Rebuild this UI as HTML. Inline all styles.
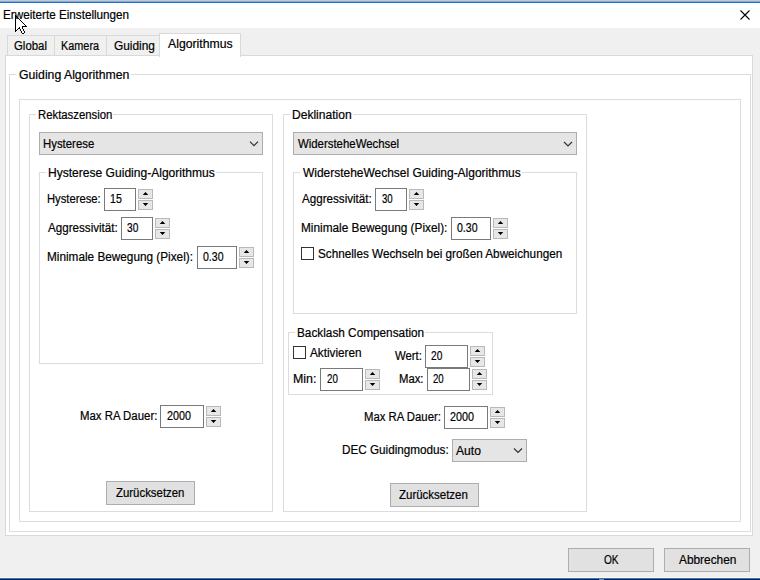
<!DOCTYPE html>
<html><head><meta charset="utf-8"><style>
html,body{margin:0;padding:0;}
body{width:760px;height:580px;position:relative;overflow:hidden;background:#f0f0f0;font-family:"Liberation Sans",sans-serif;font-size:12.3px;color:#000;}
.a{position:absolute;box-sizing:border-box;}
.t{position:absolute;white-space:nowrap;line-height:14px;transform-origin:0 0;-webkit-text-stroke:0.2px #000;}
</style></head><body>
<div class="a" style="left:0px;top:0px;width:760px;height:1px;background:#c9c9c9;"></div>
<div class="a" style="left:0px;top:1px;width:760px;height:1px;background:#7fa9d8;"></div>
<div class="a" style="left:0px;top:2px;width:760px;height:1px;background:#1f75cc;"></div>
<div class="a" style="left:0px;top:3px;width:760px;height:25px;background:#fff;"></div>
<div class="a" style="left:0px;top:577px;width:760px;height:1px;background:#f6f6f6;"></div>
<div class="a" style="left:0px;top:578px;width:760px;height:1px;background:#2a7ad0;"></div>
<div class="a" style="left:0px;top:579px;width:760px;height:1px;background:#0b1e3c;"></div>
<svg class="a" style="left:0;top:0" width="40" height="40"><path d="M16 17h1v1h-1zM16 18h1v1h-1zM17 18h1v1h-1zM16 19h1v1h-1zM17 19h1v1h-1zM18 19h1v1h-1zM16 20h1v1h-1zM17 20h1v1h-1zM18 20h1v1h-1zM19 20h1v1h-1zM16 21h1v1h-1zM17 21h1v1h-1zM18 21h1v1h-1zM19 21h1v1h-1zM20 21h1v1h-1zM16 22h1v1h-1zM17 22h1v1h-1zM18 22h1v1h-1zM19 22h1v1h-1zM20 22h1v1h-1zM21 22h1v1h-1zM16 23h1v1h-1zM17 23h1v1h-1zM18 23h1v1h-1zM19 23h1v1h-1zM20 23h1v1h-1zM21 23h1v1h-1zM22 23h1v1h-1zM16 24h1v1h-1zM17 24h1v1h-1zM18 24h1v1h-1zM19 24h1v1h-1zM20 24h1v1h-1zM21 24h1v1h-1zM22 24h1v1h-1zM23 24h1v1h-1zM16 25h1v1h-1zM17 25h1v1h-1zM18 25h1v1h-1zM19 25h1v1h-1zM20 25h1v1h-1zM21 25h1v1h-1zM22 25h1v1h-1zM23 25h1v1h-1zM24 25h1v1h-1zM16 26h1v1h-1zM17 26h1v1h-1zM18 26h1v1h-1zM19 26h1v1h-1zM20 26h1v1h-1zM21 26h1v1h-1zM16 27h1v1h-1zM17 27h1v1h-1zM18 27h1v1h-1zM20 27h1v1h-1zM21 27h1v1h-1zM16 28h1v1h-1zM17 28h1v1h-1zM20 28h1v1h-1zM21 28h1v1h-1zM16 29h1v1h-1zM21 29h1v1h-1zM22 29h1v1h-1zM21 30h1v1h-1zM22 30h1v1h-1zM22 31h1v1h-1zM23 31h1v1h-1zM22 32h1v1h-1zM23 32h1v1h-1z" fill="#fff" shape-rendering="crispEdges"/><path d="M15 15h1v1h-1zM15 16h1v1h-1zM16 16h1v1h-1zM15 17h1v1h-1zM17 17h1v1h-1zM15 18h1v1h-1zM18 18h1v1h-1zM15 19h1v1h-1zM19 19h1v1h-1zM15 20h1v1h-1zM20 20h1v1h-1zM15 21h1v1h-1zM21 21h1v1h-1zM15 22h1v1h-1zM22 22h1v1h-1zM15 23h1v1h-1zM23 23h1v1h-1zM15 24h1v1h-1zM24 24h1v1h-1zM15 25h1v1h-1zM25 25h1v1h-1zM15 26h1v1h-1zM22 26h1v1h-1zM23 26h1v1h-1zM24 26h1v1h-1zM25 26h1v1h-1zM26 26h1v1h-1zM15 27h1v1h-1zM19 27h1v1h-1zM22 27h1v1h-1zM15 28h1v1h-1zM18 28h1v1h-1zM19 28h1v1h-1zM22 28h1v1h-1zM15 29h1v1h-1zM17 29h1v1h-1zM20 29h1v1h-1zM23 29h1v1h-1zM15 30h1v1h-1zM16 30h1v1h-1zM20 30h1v1h-1zM23 30h1v1h-1zM15 31h1v1h-1zM21 31h1v1h-1zM24 31h1v1h-1zM21 32h1v1h-1zM24 32h1v1h-1zM22 33h1v1h-1zM23 33h1v1h-1z" fill="#000" shape-rendering="crispEdges"/></svg>
<div class="t" style="left:2.95px;top:8.04px;transform:scaleX(0.9511)">Erweiterte Einstellungen</div>
<div class="a" style="left:7px;top:35px;width:48px;height:22px;border:1px solid #d9d9d9;background:#f0f0f0;"></div>
<div class="a" style="left:54px;top:35px;width:53px;height:22px;border:1px solid #d9d9d9;background:#f0f0f0;"></div>
<div class="a" style="left:106px;top:35px;width:54px;height:22px;border:1px solid #d9d9d9;background:#f0f0f0;"></div>
<div class="t" style="left:14.00px;top:38.74px;transform:scaleX(0.9257)">Global</div>
<div class="t" style="left:61.12px;top:38.74px;transform:scaleX(0.8837)">Kamera</div>
<div class="t" style="left:113.90px;top:38.74px;transform:scaleX(0.9667)">Guiding</div>
<div class="a" style="left:5px;top:55px;width:748px;height:481px;border:1px solid #d9d9d9;background:#fff;"></div>
<div class="a" style="left:159px;top:33px;width:82px;height:24px;border:1px solid #d9d9d9;background:#fff;border-bottom:none;"></div>
<div class="t" style="left:168.20px;top:36.94px;transform:scaleX(0.9954)">Algorithmus</div>
<div class="a" style="left:9px;top:74px;width:742px;height:458px;border:1px solid #dcdcdc;"></div>
<div class="a" style="left:16px;top:74px;width:115px;height:1px;background:#fff"></div>
<div class="t" style="left:19.00px;top:67.94px;transform:scaleX(0.9964)">Guiding Algorithmen</div>
<div class="a" style="left:19px;top:99px;width:722px;height:423px;border:1px solid #dcdcdc;"></div>
<div class="a" style="left:29px;top:114px;width:244px;height:398px;border:1px solid #dcdcdc;"></div>
<div class="a" style="left:36px;top:114px;width:77px;height:1px;background:#fff"></div>
<div class="t" style="left:37.88px;top:108.04px;transform:scaleX(0.9215)">Rektaszension</div>
<div class="a" style="left:39px;top:132px;width:224px;height:23px;border:1px solid #adadad;background:#e5e5e5;"></div>
<div class="t" style="left:43.07px;top:136.74px;transform:scaleX(0.9259)">Hysterese</div>
<div class="a" style="left:39px;top:172px;width:224px;height:192px;border:1px solid #dcdcdc;"></div>
<div class="a" style="left:46px;top:172px;width:170px;height:1px;background:#fff"></div>
<div class="t" style="left:47.92px;top:165.74px;transform:scaleX(0.9805)">Hysterese Guiding-Algorithmus</div>
<div class="t" style="left:47.09px;top:191.74px;transform:scaleX(0.9123)">Hysterese:</div>
<div class="a" style="left:104px;top:188px;width:32px;height:23px;border:1px solid #7a7a7a;background:#fff;"></div>
<div class="t" style="left:109.94px;top:192.04px;transform:scaleX(0.8615)">15</div>
<div class="a" style="left:138px;top:189px;width:15px;height:10px;border:1px solid #b9b9b9;background:#e7e7e7;"></div>
<div class="a" style="left:138px;top:200px;width:15px;height:10px;border:1px solid #b9b9b9;background:#e7e7e7;"></div>
<div class="t" style="left:48.00px;top:220.74px;transform:scaleX(0.9452)">Aggressivität:</div>
<div class="a" style="left:121px;top:217px;width:32px;height:23px;border:1px solid #7a7a7a;background:#fff;"></div>
<div class="t" style="left:127.40px;top:221.04px;transform:scaleX(0.8286)">30</div>
<div class="a" style="left:155px;top:218px;width:15px;height:10px;border:1px solid #b9b9b9;background:#e7e7e7;"></div>
<div class="a" style="left:155px;top:229px;width:15px;height:10px;border:1px solid #b9b9b9;background:#e7e7e7;"></div>
<div class="t" style="left:47.44px;top:249.74px;transform:scaleX(0.9576)">Minimale Bewegung (Pixel):</div>
<div class="a" style="left:197px;top:246px;width:40px;height:23px;border:1px solid #7a7a7a;background:#fff;"></div>
<div class="t" style="left:203.40px;top:250.04px;transform:scaleX(0.8583)">0.30</div>
<div class="a" style="left:239px;top:247px;width:15px;height:10px;border:1px solid #b9b9b9;background:#e7e7e7;"></div>
<div class="a" style="left:239px;top:258px;width:15px;height:10px;border:1px solid #b9b9b9;background:#e7e7e7;"></div>
<div class="t" style="left:79.97px;top:409.04px;transform:scaleX(0.9280)">Max RA Dauer:</div>
<div class="a" style="left:160px;top:405px;width:44px;height:23px;border:1px solid #7a7a7a;background:#fff;"></div>
<div class="t" style="left:166.90px;top:409.24px;transform:scaleX(0.8741)">2000</div>
<div class="a" style="left:206px;top:406px;width:15px;height:10px;border:1px solid #b9b9b9;background:#e7e7e7;"></div>
<div class="a" style="left:206px;top:417px;width:15px;height:10px;border:1px solid #b9b9b9;background:#e7e7e7;"></div>
<div class="a" style="left:106px;top:481px;width:89px;height:24px;border:1px solid #adadad;background:#e1e1e1;"></div>
<div class="t" style="left:115.60px;top:485.54px;transform:scaleX(0.9270)">Zurücksetzen</div>
<div class="a" style="left:283px;top:114px;width:304px;height:398px;border:1px solid #dcdcdc;"></div>
<div class="a" style="left:290px;top:114px;width:63px;height:1px;background:#fff"></div>
<div class="t" style="left:291.82px;top:108.04px;transform:scaleX(0.9800)">Deklination</div>
<div class="a" style="left:293px;top:132px;width:284px;height:23px;border:1px solid #adadad;background:#e5e5e5;"></div>
<div class="t" style="left:298.00px;top:136.74px;transform:scaleX(0.9266)">WidersteheWechsel</div>
<div class="a" style="left:293px;top:172px;width:284px;height:142px;border:1px solid #dcdcdc;"></div>
<div class="a" style="left:300px;top:172px;width:222px;height:1px;background:#fff"></div>
<div class="t" style="left:302.80px;top:165.74px;transform:scaleX(0.9723)">WidersteheWechsel Guiding-Algorithmus</div>
<div class="t" style="left:302.00px;top:191.74px;transform:scaleX(0.9452)">Aggressivität:</div>
<div class="a" style="left:375px;top:188px;width:32px;height:23px;border:1px solid #7a7a7a;background:#fff;"></div>
<div class="t" style="left:382.00px;top:192.04px;transform:scaleX(0.7857)">30</div>
<div class="a" style="left:409px;top:189px;width:15px;height:10px;border:1px solid #b9b9b9;background:#e7e7e7;"></div>
<div class="a" style="left:409px;top:200px;width:15px;height:10px;border:1px solid #b9b9b9;background:#e7e7e7;"></div>
<div class="t" style="left:301.04px;top:220.74px;transform:scaleX(0.9603)">Minimale Bewegung (Pixel):</div>
<div class="a" style="left:451px;top:217px;width:40px;height:23px;border:1px solid #7a7a7a;background:#fff;"></div>
<div class="t" style="left:457.40px;top:221.04px;transform:scaleX(0.8583)">0.30</div>
<div class="a" style="left:493px;top:218px;width:15px;height:10px;border:1px solid #b9b9b9;background:#e7e7e7;"></div>
<div class="a" style="left:493px;top:229px;width:15px;height:10px;border:1px solid #b9b9b9;background:#e7e7e7;"></div>
<div class="a" style="left:301px;top:247px;width:13px;height:13px;border:1px solid #333;background:#fff;"></div>
<div class="t" style="left:317.90px;top:246.74px;transform:scaleX(0.9535)">Schnelles Wechseln bei großen Abweichungen</div>
<div class="a" style="left:288px;top:332px;width:205px;height:63px;border:1px solid #dcdcdc;"></div>
<div class="a" style="left:295px;top:332px;width:130px;height:1px;background:#fff"></div>
<div class="t" style="left:297.04px;top:325.74px;transform:scaleX(0.9588)">Backlash Compensation</div>
<div class="a" style="left:293px;top:346px;width:13px;height:13px;border:1px solid #333;background:#fff;"></div>
<div class="t" style="left:310.00px;top:345.74px;transform:scaleX(0.9556)">Aktivieren</div>
<div class="t" style="left:394.80px;top:348.94px;transform:scaleX(0.9241)">Wert:</div>
<div class="a" style="left:425px;top:345px;width:43px;height:23px;border:1px solid #7a7a7a;background:#fff;"></div>
<div class="t" style="left:431.40px;top:349.04px;transform:scaleX(0.8286)">20</div>
<div class="a" style="left:470px;top:346px;width:15px;height:10px;border:1px solid #b9b9b9;background:#e7e7e7;"></div>
<div class="a" style="left:470px;top:357px;width:15px;height:10px;border:1px solid #b9b9b9;background:#e7e7e7;"></div>
<div class="t" style="left:292.90px;top:372.04px;transform:scaleX(1.0045)">Min:</div>
<div class="a" style="left:320px;top:368px;width:43px;height:23px;border:1px solid #7a7a7a;background:#fff;"></div>
<div class="t" style="left:326.90px;top:372.04px;transform:scaleX(0.7929)">20</div>
<div class="a" style="left:365px;top:369px;width:15px;height:10px;border:1px solid #b9b9b9;background:#e7e7e7;"></div>
<div class="a" style="left:365px;top:380px;width:15px;height:10px;border:1px solid #b9b9b9;background:#e7e7e7;"></div>
<div class="t" style="left:399.08px;top:371.84px;transform:scaleX(0.9200)">Max:</div>
<div class="a" style="left:427px;top:368px;width:43px;height:23px;border:1px solid #7a7a7a;background:#fff;"></div>
<div class="t" style="left:433.40px;top:372.04px;transform:scaleX(0.7857)">20</div>
<div class="a" style="left:472px;top:369px;width:15px;height:10px;border:1px solid #b9b9b9;background:#e7e7e7;"></div>
<div class="a" style="left:472px;top:380px;width:15px;height:10px;border:1px solid #b9b9b9;background:#e7e7e7;"></div>
<div class="t" style="left:363.88px;top:409.74px;transform:scaleX(0.9220)">Max RA Dauer:</div>
<div class="a" style="left:444px;top:406px;width:44px;height:23px;border:1px solid #7a7a7a;background:#fff;"></div>
<div class="t" style="left:450.40px;top:410.04px;transform:scaleX(0.8741)">2000</div>
<div class="a" style="left:490px;top:407px;width:15px;height:10px;border:1px solid #b9b9b9;background:#e7e7e7;"></div>
<div class="a" style="left:490px;top:418px;width:15px;height:10px;border:1px solid #b9b9b9;background:#e7e7e7;"></div>
<div class="t" style="left:341.85px;top:442.94px;transform:scaleX(0.9514)">DEC Guidingmodus:</div>
<div class="a" style="left:452px;top:439px;width:75px;height:23px;border:1px solid #adadad;background:#e5e5e5;"></div>
<div class="t" style="left:456.40px;top:443.64px;transform:scaleX(0.9840)">Auto</div>
<div class="a" style="left:390px;top:483px;width:89px;height:24px;border:1px solid #adadad;background:#e1e1e1;"></div>
<div class="t" style="left:399.40px;top:488.04px;transform:scaleX(0.9324)">Zurücksetzen</div>
<div class="a" style="left:568px;top:548px;width:86px;height:24px;border:1px solid #adadad;background:#e1e1e1;"></div>
<div class="t" style="left:604.20px;top:553.04px;transform:scaleX(0.8222)">OK</div>
<div class="a" style="left:664px;top:548px;width:86px;height:24px;border:1px solid #adadad;background:#e1e1e1;"></div>
<div class="t" style="left:678.80px;top:553.04px;transform:scaleX(0.9644)">Abbrechen</div>
<svg class="a" style="left:0;top:0" width="760" height="580"><path d="M740.5 10.5L749.5 19.5M749.5 10.5L740.5 19.5" stroke="#000" stroke-width="1.1" fill="none"/><path d="M142.75 195.0L148.25 195.0L145.5 192.0ZM142.75 203.0L148.25 203.0L145.5 206.0ZM159.75 224.0L165.25 224.0L162.5 221.0ZM159.75 232.0L165.25 232.0L162.5 235.0ZM243.75 253.0L249.25 253.0L246.5 250.0ZM243.75 261.0L249.25 261.0L246.5 264.0ZM210.75 412.0L216.25 412.0L213.5 409.0ZM210.75 420.0L216.25 420.0L213.5 423.0ZM413.75 195.0L419.25 195.0L416.5 192.0ZM413.75 203.0L419.25 203.0L416.5 206.0ZM497.75 224.0L503.25 224.0L500.5 221.0ZM497.75 232.0L503.25 232.0L500.5 235.0ZM474.75 352.0L480.25 352.0L477.5 349.0ZM474.75 360.0L480.25 360.0L477.5 363.0ZM369.75 375.0L375.25 375.0L372.5 372.0ZM369.75 383.0L375.25 383.0L372.5 386.0ZM476.75 375.0L482.25 375.0L479.5 372.0ZM476.75 383.0L482.25 383.0L479.5 386.0ZM494.75 413.0L500.25 413.0L497.5 410.0ZM494.75 421.0L500.25 421.0L497.5 424.0Z" fill="#000"/><path d="M250 141.6L254 145.6L258 141.6M564 142L568 146L572 142M514 448.5L518 452.5L522 448.5" fill="none" stroke="#333" stroke-width="1.2"/><rect x="599" y="579" width="5" height="1" fill="#8a8a8a"/></svg>
</body></html>
